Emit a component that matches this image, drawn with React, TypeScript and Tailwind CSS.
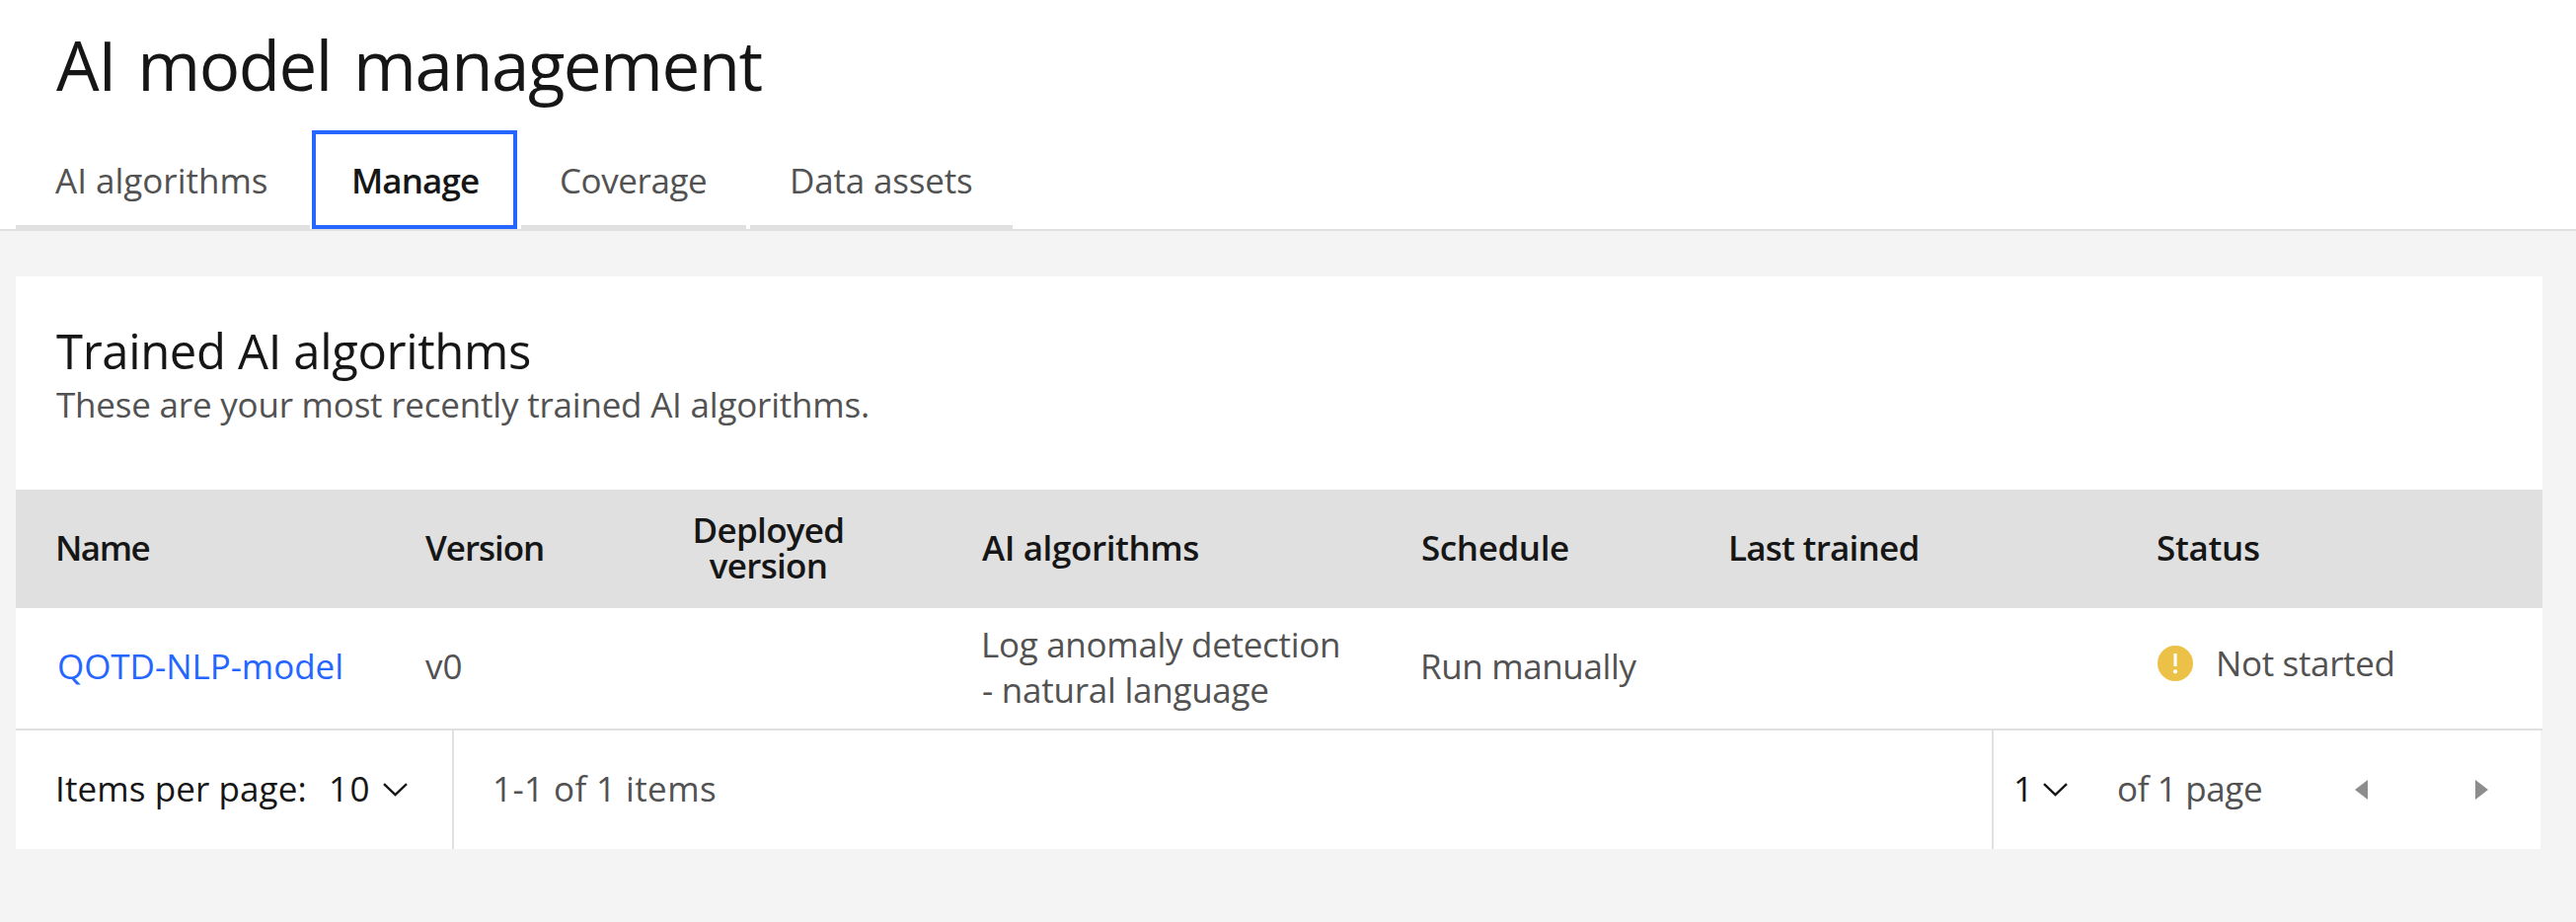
const tabs = [
  { label: "AI algorithms", box: "w-[298px] mr-[2px] pl-[40px]", tracking: "" },
  { label: "Manage", box: "w-[208px] mr-[4px] pl-[36px]", tracking: "tracking-[-0.9px]", active: true },
  { label: "Coverage", box: "w-[228px] mr-[4px] pl-[39px]", tracking: "tracking-[-0.43px]" },
  { label: "Data assets", box: "w-[266px] pl-[40px]", tracking: "tracking-[-0.18px]" },
];

const columns = "grid grid-cols-[414px_185px_327px_496px_312px_434px_392px]";

function Chevron({ className }: { className: string }) {
  return (
    <svg className={className} width="25" height="14" viewBox="0 0 25 14" fill="none" stroke="#161616" strokeWidth="2.4">
      <path d="M1 1.2 12.5 12.2 24 1.2" />
    </svg>
  );
}

function StatusIcon() {
  return (
    <svg className="shrink-0" width="36" height="36" viewBox="0 0 36 36">
      <circle cx="18" cy="18" r="18" fill="#ebc247" />
      <rect x="16.5" y="8" width="3.1" height="13" fill="#fff" />
      <circle cx="18" cy="26.3" r="2.1" fill="#fff" />
    </svg>
  );
}

function Tabs() {
  return (
    <nav className="flex pl-4">
      {tabs.map((tab) => (
        <button
          key={tab.label}
          className={`flex h-[100px] items-center pt-[2px] text-left ${tab.box} ${tab.tracking} ${
            tab.active
              ? "border-4 border-[#2466ff] font-semibold text-[#161616]"
              : "border-y-4 border-t-transparent border-b-[#e0e0e0] text-[#525252]"
          }`}
        >
          {tab.label}
        </button>
      ))}
    </nav>
  );
}

function TableHead() {
  return (
    <div className={`${columns} h-[120px] items-center bg-[#e0e0e0] pb-[3px] leading-9 font-semibold`}>
      <div className="pl-[40px] tracking-[-1.54px]">Name</div>
      <div className="pl-px tracking-[-1.04px]">Version</div>
      <div className="text-center tracking-[-0.7px]">
        Deployed
        <br />
        version
      </div>
      <div className="pl-[53px] tracking-[-0.4px]">AI algorithms</div>
      <div className="pl-[2px] tracking-[-0.4px]">Schedule</div>
      <div className="pl-px tracking-[-0.75px]">Last trained</div>
      <div className="pl-px tracking-[-0.29px]">Status</div>
    </div>
  );
}

function TableRow() {
  return (
    <div className={`${columns} h-[124px] items-center border-b-2 border-[#e0e0e0] leading-[46px] text-[#525252]`}>
      <a className="pb-[5px] pl-[42px] tracking-[-0.05px] text-[#2466ff]">QOTD-NLP-model</a>
      <div className="pb-[5px] pl-px">v0</div>
      <div />
      <div className="pb-[3px] pl-[52px]">
        <div className="tracking-[-0.3px]">Log anomaly detection</div>
        <div className="pl-px tracking-[-0.25px]">- natural language</div>
      </div>
      <div className="pb-[5px] pl-px tracking-[-0.37px]">Run manually</div>
      <div />
      <div className="flex items-center gap-[23px] pb-[10px] pl-[2px]">
        <StatusIcon />
        <span className="tracking-[-0.35px]">Not started</span>
      </div>
    </div>
  );
}

function Pagination() {
  return (
    <div className="mr-[2px] flex h-[120px] bg-white text-[#525252]">
      <div className="flex w-[444px] items-center border-r-2 border-[#e0e0e0] pl-[40px] text-[#161616]">
        <span className="w-[277px] pb-[3px] tracking-[0.1px]">Items per page:</span>
        <span className="w-[55px] pb-[3px] tracking-[1.5px]">10</span>
        <Chevron className="shrink-0" />
      </div>
      <div className="flex flex-1 items-center pb-[3px] pl-[39px] tracking-[0.4px]">1-1 of 1 items</div>
      <div className="flex w-[556px] items-center border-l-2 border-[#e0e0e0] pl-[20px]">
        <span className="w-[30px] pb-[3px] text-[#161616]">1</span>
        <Chevron className="mr-[50px] shrink-0" />
        <span className="w-[241px] pb-[3px] tracking-[-0.36px]">of 1 page</span>
        <svg className="mr-[109px] shrink-0" width="13" height="20" viewBox="0 0 13 20" fill="#8d8d8d">
          <path d="M13 0 0 10l13 10z" />
        </svg>
        <svg className="shrink-0" width="13" height="20" viewBox="0 0 13 20" fill="#8d8d8d">
          <path d="m0 0 13 10L0 20z" />
        </svg>
      </div>
    </div>
  );
}

export default function App() {
  return (
    <div className="min-h-screen bg-[#f4f4f4] font-['Open_Sans',sans-serif] text-[35px] leading-[46px] text-[#161616]">
      <header className="border-b-2 border-[#e0e0e0] bg-white pt-[17px]">
        <h1 className="mb-[19px] pl-[57px] text-[69px] leading-[96px] tracking-[-1.5px] [word-spacing:6px]">
          AI model management
        </h1>
        <Tabs />
      </header>
      <main className="pt-[46px] pr-[34px] pl-4">
        <div className="bg-white">
          <div className="h-[216px] pt-[43px] pl-[41px]">
            <h2 className="text-[49px] leading-[64px] tracking-[-0.36px]">Trained AI algorithms</h2>
            <p className="tracking-[-0.21px] text-[#525252]">These are your most recently trained AI algorithms.</p>
          </div>
          <TableHead />
          <TableRow />
        </div>
        <Pagination />
      </main>
    </div>
  );
}
